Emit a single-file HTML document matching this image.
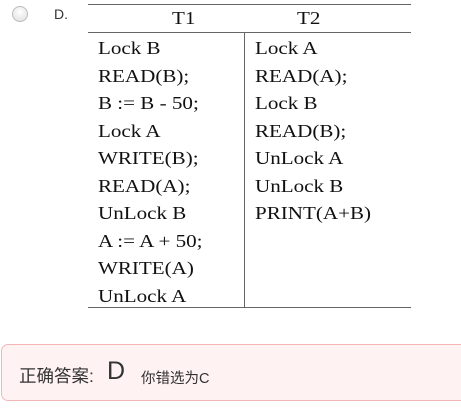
<!DOCTYPE html><html><head><style>
body{margin:0;width:461px;height:415px;background:#fff;position:relative;overflow:hidden;font-family:"Liberation Serif",serif;}
.radio{position:absolute;left:12px;top:6px;width:14px;height:14px;border-radius:50%;border:1px solid #bbb;background:radial-gradient(circle at 50% 35%,#fff,#ddd);}
.lab{position:absolute;left:54px;top:6px;font:14px "Liberation Sans",sans-serif;color:#333;}
.hl{position:absolute;left:88px;width:323px;height:1px;background:#666;}
.vl{position:absolute;left:244px;top:32px;width:1px;height:275px;background:#666;}
.col{position:absolute;top:35px;font-size:18px;color:#111;line-height:27.5px;transform:scaleX(1.17);transform-origin:0 0;white-space:nowrap;}
.h{position:absolute;top:8px;font-size:18px;color:#111;transform:scaleX(1.17);transform-origin:0 0;}
.box{position:absolute;left:1px;top:344px;width:470px;height:55px;border:1px solid #f4b6b6;border-radius:7px;background:#fff2f2;font-family:"Liberation Sans","Noto Sans CJK SC",sans-serif;color:#333;}
</style></head><body>
<div class="radio"></div><div class="lab">D.</div>
<div class="hl" style="top:4px"></div><div class="hl" style="top:32px"></div><div class="hl" style="top:307px"></div>
<div class="vl"></div>
<div class="h" style="left:172px">T1</div><div class="h" style="left:297px">T2</div>
<div class="col" style="left:98px">Lock B<br>READ(B);<br>B := B - 50;<br>Lock A<br>WRITE(B);<br>READ(A);<br>UnLock B<br>A := A + 50;<br>WRITE(A)<br>UnLock A</div>
<div class="col" style="left:255px">Lock A<br>READ(A);<br>Lock B<br>READ(B);<br>UnLock A<br>UnLock B<br>PRINT(A+B)</div>
<div class="box"><span style="position:absolute;left:17px;top:18px;font-size:17.5px">正确答案:</span><span style="position:absolute;left:105px;top:12px;font-size:25px">D</span><span style="position:absolute;left:139px;top:22px;font-size:14.5px">你错选为C</span></div>
</body></html>
